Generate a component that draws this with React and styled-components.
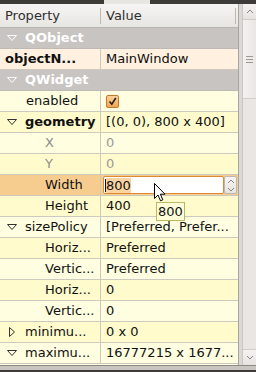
import React from "react";
import styled, { createGlobalStyle } from "styled-components";

const GlobalStyle = createGlobalStyle`
  body {
    margin: 0;
    font-family: "DejaVu Sans", "Liberation Sans", sans-serif;
    font-size: 13px;
  }
`;

const Window = styled.div`
  position: relative;
  width: 256px;
  height: 372px;
  overflow: hidden;
  background: #edecea;
  display: flex;
  flex-direction: column;
`;

const TitleStrip = styled.div`
  height: 4px;
  background: #3c3b37;
  display: flex;
`;

const TitleLight = styled.div`
  width: 46px;
  margin-left: 104px;
  background: #e8e6e2;
`;

const Body = styled.div`
  display: flex;
  height: 361px;
`;

const Table = styled.div`
  width: 238px;
  display: flex;
  flex-direction: column;
  background: #fffee0;
`;

const Header = styled.div`
  height: 24px;
  box-sizing: border-box;
  display: grid;
  grid-template-columns: 101px 1fr;
  background: linear-gradient(#f6f5f3, #e7e5e2);
  border-bottom: 1px solid #b9b5af;
  color: #2e2e2e;
`;

const HeaderCell = styled.div`
  position: relative;
  padding-left: 5px;
  line-height: 23px;
  &::after {
    content: "";
    position: absolute;
    right: ${(p) => (p.last ? "2px" : "0")};
    top: 4px;
    bottom: 3px;
    width: 1px;
    background: #bdb9b2;
  }
`;

const Row = styled.div`
  height: 21px;
  box-sizing: border-box;
  display: grid;
  grid-template-columns: ${(p) => (p.span ? "1fr" : "101px 1fr")};
  background: ${(p) => p.bg};
  border-bottom: 1px solid ${(p) => (p.span ? "#bdbab6" : "#cdc9bf")};
  line-height: 20px;
  white-space: nowrap;
`;

const NameCell = styled.div`
  display: flex;
  align-items: center;
  padding-left: ${(p) => p.indent}px;
  border-right: 1px solid #cdc9bf;
  color: ${(p) => (p.muted ? "#8c8c8c" : "#111")};
  font-weight: ${(p) => (p.bold ? "bold" : "normal")};
  background: ${(p) => p.bg || "transparent"};
  overflow: hidden;
`;

const CategoryCell = styled.div`
  display: flex;
  align-items: center;
  color: #ffffff;
  font-weight: bold;
`;

const Arrow = styled.span`
  width: 26px;
  display: flex;
  justify-content: center;
  align-items: center;
  margin-left: -1px;
`;

const ValueCell = styled.div`
  display: flex;
  align-items: center;
  padding-left: 5px;
  color: ${(p) => (p.muted ? "#9a9a9a" : "#111")};
  background: ${(p) => p.bg || "transparent"};
  overflow: hidden;
`;

const EditorCell = styled.div`
  display: flex;
  align-items: center;
  padding: 1px 1px 1px 2px;
  background: #f7cd8f;
`;

const Editor = styled.div`
  flex: 1;
  height: 18px;
  box-sizing: border-box;
  border: 1px solid #de8a35;
  border-radius: 2px;
  background: #ffffff;
  display: flex;
  align-items: center;
  padding-left: 1px;
`;

const Caret = styled.span`
  width: 1px;
  height: 13px;
  background: #111;
`;

const Selected = styled.span`
  background: #fad39e;
  line-height: 15px;
  color: #111;
`;

const Spin = styled.div`
  width: 13px;
  height: 18px;
  box-sizing: border-box;
  border: 1px solid #bdb9b2;
  border-radius: 2px;
  background: linear-gradient(#f7f6f4, #e6e4e0);
  display: flex;
  flex-direction: column;
  align-items: center;
  justify-content: space-around;
`;

const CheckBox = styled.span`
  width: 11px;
  height: 11px;
  border: 1px solid #c3782c;
  border-radius: 2px;
  background: linear-gradient(#fbd19b, #f2a652);
  display: flex;
  align-items: center;
  justify-content: center;
`;

const Gutter = styled.div`
  width: 18px;
  display: flex;
  border-left: 1px solid #a9a59f;
  box-sizing: border-box;
  background: #dcd9d5;
`;

const ScrollBar = styled.div`
  margin-left: 3px;
  flex: 1;
  display: flex;
  flex-direction: column;
  background: #e9e7e4;
  border-left: 1px solid #cac6c1;
`;

const ScrollButton = styled.div`
  height: 15px;
  display: flex;
  align-items: center;
  justify-content: center;
  background: linear-gradient(#f4f3f1, #e6e4e1);
  border-bottom: ${(p) => (p.down ? "none" : "1px solid #cfcbc6")};
  border-top: ${(p) => (p.down ? "1px solid #cfcbc6" : "none")};
`;

const Handle = styled.div`
  height: 78px;
  background: linear-gradient(90deg, #f3f2f0, #e9e7e4);
  border-bottom: 1px solid #d2cec9;
  display: flex;
  align-items: center;
  justify-content: center;
`;

const Trough = styled.div`
  flex: 1;
`;

const BottomBar = styled.div`
  height: 7px;
  box-sizing: border-box;
  border-top: 1px solid #8d8a85;
  border-bottom: 2px solid #3c3b37;
  background: #c9c6c2;
`;

const Tooltip = styled.div`
  position: absolute;
  left: 156px;
  top: 202px;
  width: 29px;
  height: 19px;
  box-sizing: border-box;
  background: #ffffdc;
  border: 1px solid #bcb860;
  color: #111;
  line-height: 17px;
  text-align: center;
`;

const Pointer = styled.svg`
  position: absolute;
  left: 154px;
  top: 183px;
`;

const Tri = ({ dir = "down", color }) => (
  <svg width="12" height="12" viewBox="0 0 12 12">
    {dir === "down" ? (
      <polygon points="1.5,3.5 10.5,3.5 6,8.5" fill="none" stroke={color} strokeWidth="1" />
    ) : (
      <polygon points="3.5,1.5 3.5,10.5 8.5,6" fill="none" stroke={color} strokeWidth="1" />
    )}
  </svg>
);

const Chevron = ({ up }) => (
  <svg width="8" height="5" viewBox="0 0 8 5">
    <polyline
      points={up ? "1,4 4,1 7,4" : "1,1 4,4 7,1"}
      fill="none"
      stroke="#8a8782"
      strokeWidth="1"
    />
  </svg>
);

const LIGHT = "#fffee0";
const DARK = "#fffbcc";

const props = [
  { name: "enabled", indent: 26, check: true },
  { name: "geometry", tri: "down", bold: true, value: "[(0, 0), 800 x 400]" },
  { name: "X", indent: 45, value: "0", muted: true },
  { name: "Y", indent: 45, value: "0", muted: true },
  { name: "Width", indent: 45, editing: true },
  { name: "Height", indent: 45, value: "400" },
  { name: "sizePolicy", tri: "down", value: "[Preferred, Prefer..." },
  { name: "Horiz...", indent: 45, value: "Preferred" },
  { name: "Vertic...", indent: 45, value: "Preferred" },
  { name: "Horiz...", indent: 45, value: "0" },
  { name: "Vertic...", indent: 45, value: "0" },
  { name: "minimu...", tri: "right", value: "0 x 0" },
  { name: "maximu...", tri: "down", value: "16777215 x 1677..." },
];

function Category({ label }) {
  return (
    <Row span bg="#c7c4c1">
      <CategoryCell>
        <Arrow>
          <Tri color="#ffffff" />
        </Arrow>
        {label}
      </CategoryCell>
    </Row>
  );
}

function PropRow({ p, index }) {
  const bg = index % 2 === 0 ? LIGHT : DARK;
  return (
    <Row bg={bg}>
      <NameCell
        indent={p.tri ? 0 : p.indent}
        bold={p.bold}
        muted={p.muted}
        bg={p.editing ? "#f7cd8f" : null}
      >
        {p.tri && (
          <Arrow>
            <Tri dir={p.tri} color="#333" />
          </Arrow>
        )}
        {p.name}
      </NameCell>
      {p.editing ? (
        <EditorCell>
          <Editor>
            <Caret />
            <Selected>800</Selected>
          </Editor>
          <Spin>
            <Chevron up />
            <Chevron />
          </Spin>
        </EditorCell>
      ) : (
        <ValueCell muted={p.muted}>
          {p.check ? (
            <CheckBox>
              <svg width="9" height="9" viewBox="0 0 9 9">
                <polyline points="1.5,4.5 3.8,7.2 7.8,1" fill="none" stroke="#222" strokeWidth="1.6" />
              </svg>
            </CheckBox>
          ) : (
            p.value
          )}
        </ValueCell>
      )}
    </Row>
  );
}

export default function App() {
  return (
    <>
      <GlobalStyle />
      <Window>
        <TitleStrip>
          <TitleLight />
        </TitleStrip>
        <Body>
          <Table>
            <Header>
              <HeaderCell>Property</HeaderCell>
              <HeaderCell last>Value</HeaderCell>
            </Header>
            <Category label="QObject" />
            <Row bg="#fff0df">
              <NameCell indent={5} bold>
                objectN...
              </NameCell>
              <ValueCell>MainWindow</ValueCell>
            </Row>
            <Category label="QWidget" />
            {props.map((p, i) => (
              <PropRow key={i} p={p} index={i} />
            ))}
          </Table>
          <Gutter>
            <ScrollBar>
              <ScrollButton>
                <Chevron up />
              </ScrollButton>
              <Handle>
                <svg width="7" height="7" viewBox="0 0 7 7">
                  <path d="M0 0.5H7M0 3.5H7M0 6.5H7" stroke="#9c9893" strokeWidth="1" />
                </svg>
              </Handle>
              <Trough />
              <ScrollButton down>
                <Chevron />
              </ScrollButton>
            </ScrollBar>
          </Gutter>
        </Body>
        <BottomBar />
        <Tooltip>800</Tooltip>
        <Pointer width="12" height="19" viewBox="0 0 12 19">
          <path
            d="M0.5 0.5 L0.5 15.5 L4 12 L6.5 17.8 L8.8 16.8 L6.4 11.2 L11 11.2 Z"
            fill="#ffffff"
            stroke="#000000"
            strokeWidth="1"
            strokeLinejoin="round"
          />
        </Pointer>
      </Window>
    </>
  );
}
